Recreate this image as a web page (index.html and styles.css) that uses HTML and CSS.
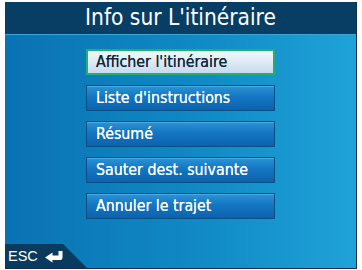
FILE: index.html
```html
<!DOCTYPE html>
<html>
<head>
<meta charset="utf-8">
<link rel="stylesheet" href="styles.css">
</head>
<body>
<div class="screen">
  <div class="header">Info sur L'itinéraire</div>
  <div class="content">
    <div class="menu">
      <div class="btn selected">Afficher l'itinéraire</div>
      <div class="btn">Liste d'instructions</div>
      <div class="btn">Résumé</div>
      <div class="btn">Sauter dest. suivante</div>
      <div class="btn">Annuler le trajet</div>
    </div>
    <div class="esc">
      <span class="esc-label">ESC</span>
      <svg class="esc-icon" width="20" height="13" viewBox="0 0 20 13">
        <path d="M14.5 1 L18.5 1 L18.5 7.5 Q18.5 10 16 10 L8.5 10 L8.5 12.5 L1 7.5 L8.5 2.5 L8.5 5.5 L14.5 5.5 Z" fill="#fff"/>
      </svg>
    </div>
  </div>
</div>
</body>
</html>
```
FILE: styles.css
```css
html, body {
  margin: 0;
  padding: 0;
  background: #fff;
}
.screen {
  margin: 2px 0 0 5px;
  width: 351px;
  height: 266px;
  border-right: 1px solid #0a2f4c;
  border-bottom: 1px solid #0a2f4c;
  display: flex;
  flex-direction: column;
  overflow: hidden;
}
.header {
  height: 32px;
  background: #083e64;
  color: #fff;
  font-family: "DejaVu Sans Condensed", "DejaVu Sans", sans-serif;
  font-size: 22.5px;
  line-height: 31px;
  text-align: center;
}
.content {
  flex: 1;
  position: relative;
  background: linear-gradient(90deg, #0a72b3 0%, #1089c5 55%, #1fa3d8 100%);
  border-top: 1px solid #3aa6d8;
  display: flex;
  flex-direction: column;
}
.menu {
  display: flex;
  flex-direction: column;
  align-items: center;
  gap: 10px;
  padding: 14px 0 0 0;
}
.btn {
  box-sizing: border-box;
  width: 189px;
  height: 26px;
  padding-left: 9px;
  font-family: "DejaVu Sans Condensed", "DejaVu Sans", sans-serif;
  font-size: 15.8px;
  line-height: 24px;
  color: #fff;
  text-shadow: 0 0 0.4px #fff;
  background: linear-gradient(180deg, #2a93d6 0%, #1476c2 45%, #0c62ad 100%);
  border: 1px solid #0a4e86;
  box-shadow: inset 0 1px 0 #4aa8e2;
}
.btn.selected {
  color: #12283c;
  text-shadow: 0 0 0.4px #12283c;
  background: linear-gradient(180deg, #f2f8fc 0%, #dfeaf5 50%, #c6daef 100%);
  border: 2px solid #22b070;
  line-height: 22px;
  padding-left: 8px;
  box-shadow: none;
}
.esc {
  position: absolute;
  left: 0;
  bottom: 0;
  width: 82px;
  height: 24px;
  background: #0a3a5e;
  clip-path: polygon(0 0, 58px 0, 82px 100%, 0 100%);
  display: flex;
  align-items: center;
  gap: 6px;
  padding-left: 3px;
}
.esc-label {
  color: #fff;
  font-family: "Liberation Sans", Arial, sans-serif;
  font-size: 14.5px;
}
.esc-icon {
  display: block;
}
```
